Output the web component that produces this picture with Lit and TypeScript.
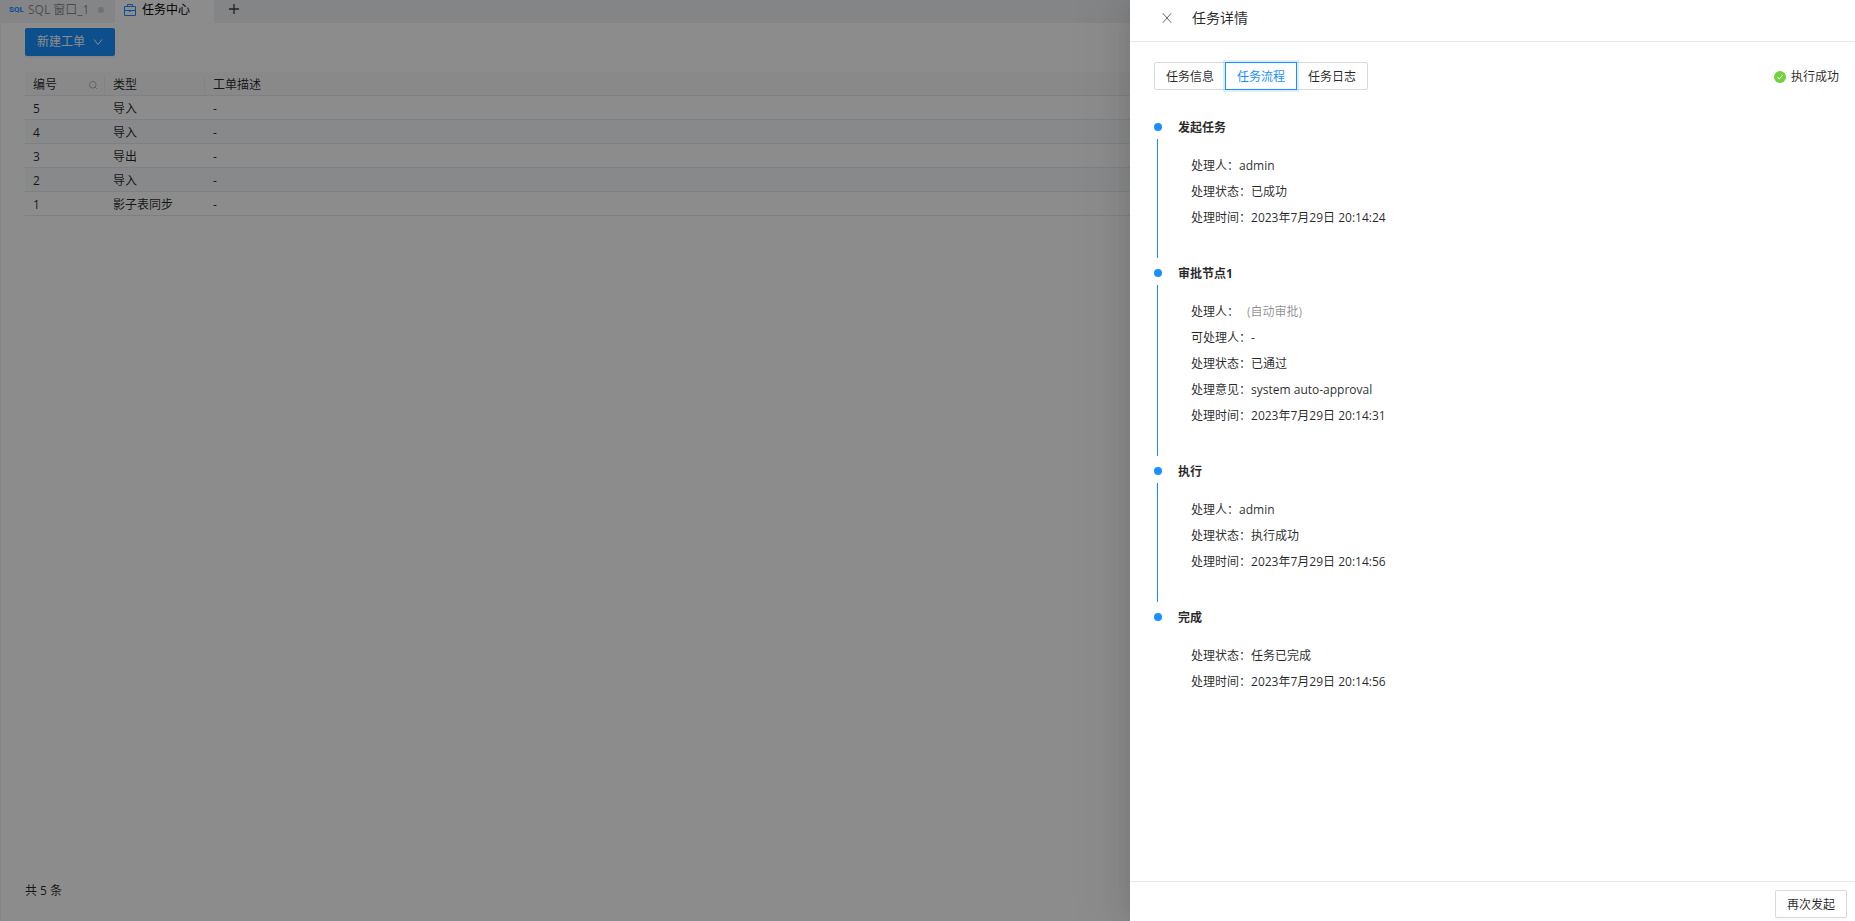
import { LitElement, html, css, svg, nothing } from "lit";
import { customElement, property, state } from "lit/decorators.js";

interface Field {
  label: string;
  value?: string;
  note?: string;
}

interface Step {
  title: string;
  fields: Field[];
}

const STEPS: Step[] = [
  {
    title: "发起任务",
    fields: [
      { label: "处理人", value: "admin" },
      { label: "处理状态", value: "已成功" },
      { label: "处理时间", value: "2023年7月29日 20:14:24" },
    ],
  },
  {
    title: "审批节点1",
    fields: [
      { label: "处理人", note: "(自动审批)" },
      { label: "可处理人", value: "-" },
      { label: "处理状态", value: "已通过" },
      { label: "处理意见", value: "system auto-approval" },
      { label: "处理时间", value: "2023年7月29日 20:14:31" },
    ],
  },
  {
    title: "执行",
    fields: [
      { label: "处理人", value: "admin" },
      { label: "处理状态", value: "执行成功" },
      { label: "处理时间", value: "2023年7月29日 20:14:56" },
    ],
  },
  {
    title: "完成",
    fields: [
      { label: "处理状态", value: "任务已完成" },
      { label: "处理时间", value: "2023年7月29日 20:14:56" },
    ],
  },
];

const TASKS = [
  { id: 5, type: "导入", desc: "-" },
  { id: 4, type: "导入", desc: "-" },
  { id: 3, type: "导出", desc: "-" },
  { id: 2, type: "导入", desc: "-" },
  { id: 1, type: "影子表同步", desc: "-" },
];

const icon = (size: number, box: string, body: unknown) => html`<svg
  width=${size}
  height=${size}
  viewBox=${box}
  fill="none"
  stroke="currentColor"
  aria-hidden="true"
>
  ${body}
</svg>`;

const shared = css`
  * {
    box-sizing: border-box;
  }
  button {
    font: inherit;
    color: inherit;
    margin: 0;
    padding: 0;
    border: 0;
    background: none;
    cursor: pointer;
  }
  svg {
    display: block;
    flex: none;
  }
`;

@customElement("task-center")
export class TaskCenter extends LitElement {
  static styles = [
    shared,
    css`
      :host {
        display: flex;
        flex-direction: column;
        background: #fff;
      }
      .tabs {
        display: flex;
        flex: none;
        height: 23px;
        background: #f0f2f5;
      }
      .tab {
        display: flex;
        align-items: center;
        height: 23px;
        padding: 0 9px 4px;
        gap: 5px;
        color: rgba(0, 0, 0, 0.45);
        white-space: nowrap;
      }
      .tab.inactive {
        width: 115px;
      }
      .tab.active {
        width: 99px;
        background: #fff;
        color: #000;
        gap: 6px;
      }
      .tab.active svg {
        color: #1890ff;
      }
      .sql {
        width: 14px;
        font: bold 8px/18px "Liberation Sans Narrow", Roboto, sans-serif;
        color: #1890ff;
      }
      .dirty {
        flex: none;
        width: 6px;
        height: 6px;
        margin-left: 4px;
        border-radius: 50%;
        background: #d0d0d0;
      }
      .add {
        display: flex;
        align-items: center;
        height: 18px;
        padding: 0 15px;
        color: rgba(0, 0, 0, 0.75);
      }
      .body {
        display: flex;
        flex-direction: column;
        flex: 1;
        padding: 5px 0 20px 24px;
        border-left: 1px solid #f0f0f0;
      }
      .create {
        display: flex;
        align-items: center;
        align-self: flex-start;
        gap: 8px;
        height: 28px;
        padding: 0 12px;
        border-radius: 2px;
        background: #1890ff;
        color: #fff;
        box-shadow: 0 2px 0 rgba(0, 0, 0, 0.045);
      }
      table {
        width: 100%;
        margin-top: 16px;
        border-collapse: separate;
        border-spacing: 0;
        table-layout: fixed;
      }
      th,
      td {
        height: 24px;
        padding: 2px 8px 0;
        border-bottom: 1px solid #e8eaee;
        text-align: left;
        font-weight: 400;
        line-height: 20px;
        vertical-align: middle;
        color: rgba(0, 0, 0, 0.85);
      }
      th {
        background: #fafafa;
      }
      tbody tr:nth-child(even) td {
        background: #f7f9fb;
      }
      .head {
        display: flex;
        align-items: center;
        justify-content: space-between;
        margin-right: -8px;
        padding-right: 7px;
        border-right: 1px solid #efefef;
      }
      .head.last {
        border-right: 0;
      }
      .head svg {
        color: #b4b4b4;
      }
      .id {
        width: 80px;
      }
      .type {
        width: 100px;
      }
      .total {
        margin-top: auto;
        line-height: 20px;
        color: rgba(0, 0, 0, 0.85);
      }
    `,
  ];

  render() {
    return html`
      <nav class="tabs">
        <button class="tab inactive">
          <span class="sql">SQL</span>
          <span>SQL 窗口_1</span>
          <span class="dirty"></span>
        </button>
        <button class="tab active">
          ${icon(
            12,
            "0 0 12 12",
            svg`<path d="M0.5 2.5h11v9h-11zM3.5 2.5v-2h5v2M0.5 6.5h11" /><path d="M5 7.2h2" />`
          )}
          <span>任务中心</span>
        </button>
        <button class="add" aria-label="新建">
          ${icon(10, "0 0 10 10", svg`<path d="M5 0v10M0 5h10" stroke-width="1.3" />`)}
        </button>
      </nav>
      <div class="body">
        <button class="create">
          新建工单
          ${icon(10, "0 0 10 10", svg`<path d="M1 2.5l4 5l4-5" />`)}
        </button>
        <table>
          <thead>
            <tr>
              <th class="id">
                <div class="head">
                  编号
                  ${icon(8, "0 0 8 8", svg`<circle cx="3.8" cy="3.8" r="3.3" /><path d="M6 6l1.8 1.8" />`)}
                </div>
              </th>
              <th class="type"><div class="head">类型</div></th>
              <th><div class="head last">工单描述</div></th>
            </tr>
          </thead>
          <tbody>
            ${TASKS.map(
              (t) => html`<tr>
                <td>${t.id}</td>
                <td>${t.type}</td>
                <td>${t.desc}</td>
              </tr>`
            )}
          </tbody>
        </table>
        <div class="total">共 5 条</div>
      </div>
    `;
  }
}

@customElement("flow-step")
export class FlowStep extends LitElement {
  @property({ attribute: false }) step!: Step;
  @property({ type: Boolean }) last = false;

  static styles = [
    shared,
    css`
      :host {
        display: grid;
        grid-template-columns: 8px 1fr;
        column-gap: 16px;
      }
      .rail {
        display: flex;
        flex-direction: column;
        align-items: center;
        gap: 8px;
        padding: 6px 0 5px;
      }
      .dot {
        flex: none;
        width: 8px;
        height: 8px;
        border-radius: 50%;
        background: #1890ff;
      }
      .line {
        flex: 1;
        width: 1px;
        margin-right: 1px;
        background: #1890ff;
      }
      h3 {
        margin: 0 0 14px;
        font-size: 12px;
        line-height: 22px;
        font-weight: 700;
      }
      dl {
        margin: 0;
        padding: 0 13px 32px;
        line-height: 26px;
      }
      .row {
        display: flex;
      }
      dt,
      dd {
        margin: 0;
      }
      .note {
        margin-left: 8px;
        color: rgba(0, 0, 0, 0.45);
      }
    `,
  ];

  render() {
    return html`
      <div class="rail">
        <span class="dot"></span>
        ${this.last ? nothing : html`<span class="line"></span>`}
      </div>
      <div>
        <h3>${this.step.title}</h3>
        <dl>
          ${this.step.fields.map(
            (f) => html`<div class="row">
              <dt>${f.label}：</dt>
              ${f.note ? html`<dd class="note">${f.note}</dd>` : html`<dd>${f.value}</dd>`}
            </div>`
          )}
        </dl>
      </div>
    `;
  }
}

@customElement("task-drawer")
export class TaskDrawer extends LitElement {
  @state() private view = "任务流程";

  static styles = [
    shared,
    css`
      :host {
        display: flex;
        flex-direction: column;
        background: #fff;
        box-shadow: -6px 0 16px -8px rgba(0, 0, 0, 0.08), -9px 0 28px 0 rgba(0, 0, 0, 0.05),
          -12px 0 48px 16px rgba(0, 0, 0, 0.03);
      }
      header {
        display: flex;
        align-items: center;
        flex: none;
        gap: 20px;
        height: 42px;
        padding: 0 32px 5px;
        border-bottom: 1px solid #e8e8e8;
      }
      h2 {
        margin: 0;
        font-size: 14px;
        line-height: 22px;
        font-weight: 400;
      }
      .close {
        color: rgba(0, 0, 0, 0.6);
      }
      .content {
        flex: 1;
        min-height: 0;
        overflow: auto;
        padding: 20px 16px 0 24px;
      }
      .bar {
        display: flex;
        align-items: center;
        justify-content: space-between;
        margin-bottom: 27px;
      }
      .group {
        display: flex;
      }
      .option {
        height: 28px;
        padding: 1px 11px 0;
        border: 1px solid #d9d9d9;
        line-height: 26px;
        cursor: pointer;
      }
      .option + .option {
        margin-left: -1px;
      }
      .option:first-child {
        border-radius: 2px 0 0 2px;
      }
      .option:last-child {
        border-radius: 0 2px 2px 0;
      }
      .option input {
        appearance: none;
        display: block;
        width: 0;
        height: 0;
        margin: 0;
      }
      .option.on {
        z-index: 1;
        border-color: #1890ff;
        color: #1890ff;
        box-shadow: 0 0 0 2px rgba(24, 144, 255, 0.15);
      }
      .status {
        display: flex;
        align-items: center;
        gap: 5px;
        padding-top: 2px;
      }
      footer {
        display: flex;
        justify-content: flex-end;
        flex: none;
        padding: 8px 8px 3px;
        border-top: 1px solid #e8e8e8;
      }
      .again {
        height: 28px;
        padding: 1px 11px 0;
        border: 1px solid #d9d9d9;
        border-radius: 2px;
        background: #fff;
        box-shadow: 0 2px 0 rgba(0, 0, 0, 0.016);
      }
    `,
  ];

  render() {
    return html`
      <header>
        <button class="close" aria-label="关闭">
          ${icon(10, "0 0 10 10", svg`<path d="M0.7 0.2l8.6 9.6M9.3 0.2l-8.6 9.6" />`)}
        </button>
        <h2>任务详情</h2>
      </header>
      <div class="content">
        <div class="bar">
          <div class="group" role="radiogroup">
            ${["任务信息", "任务流程", "任务日志"].map(
              (name) => html`<label class="option ${this.view === name ? "on" : ""}">
                <input
                  type="radio"
                  name="view"
                  .checked=${this.view === name}
                  @change=${() => (this.view = name)}
                />${name}
              </label>`
            )}
          </div>
          <div class="status">
            ${icon(
              12,
              "0 0 12 12",
              svg`<circle cx="6" cy="6" r="6" fill="#73d13d" stroke="none" /><path d="M3.6 6.1l1.8 2l3-4" stroke="#fff" />`
            )}
            <span>执行成功</span>
          </div>
        </div>
        ${STEPS.map(
          (s, i) => html`<flow-step .step=${s} ?last=${i === STEPS.length - 1}></flow-step>`
        )}
      </div>
      <footer><button class="again">再次发起</button></footer>
    `;
  }
}

@customElement("app-root")
export class AppRoot extends LitElement {
  static styles = css`
    :host {
      display: block;
      position: relative;
      height: 100vh;
      overflow: hidden;
      font-family: "Open Sans", "Noto Sans CJK SC", sans-serif;
      font-size: 12px;
      line-height: 20px;
      color: rgba(0, 0, 0, 0.85);
    }
    task-center {
      height: 100%;
    }
    .mask {
      position: absolute;
      inset: 0;
      background: rgba(0, 0, 0, 0.45);
    }
    task-drawer {
      position: absolute;
      top: 0;
      right: 0;
      bottom: 0;
      width: 725px;
      max-width: 100%;
    }
  `;

  render() {
    return html`
      <task-center></task-center>
      <div class="mask"></div>
      <task-drawer></task-drawer>
    `;
  }
}
